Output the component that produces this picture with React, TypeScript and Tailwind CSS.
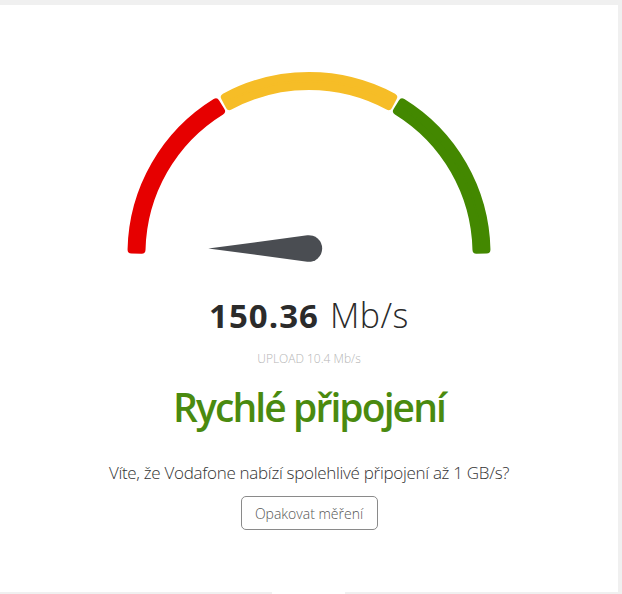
import React from 'react'

const CX = 200
const CY = 188.5

function sector(a1: number, a2: number, r1: number, r2: number) {
  const rad = (a: number) => (a * Math.PI) / 180
  const p = (r: number, a: number) => `${(CX + r * Math.cos(rad(a))).toFixed(2)} ${(CY - r * Math.sin(rad(a))).toFixed(2)}`
  return `M ${p(r2, a1)} A ${r2} ${r2} 0 0 1 ${p(r2, a2)} L ${p(r1, a2)} A ${r1} ${r1} 0 0 0 ${p(r1, a1)} Z`
}

const SEGMENTS = [
  { from: 178.7, to: 121.7, color: '#e60000' },
  { from: 118.3, to: 61.7, color: '#f6bd27' },
  { from: 58.3, to: 1.3, color: '#438800' },
]

function Gauge() {
  const nx = 200
  const ny = 183.5
  const r = 13.3
  return (
    <svg width="400" height="200" viewBox="0 0 400 200" className="block">
      {SEGMENTS.map(seg => (
        <path
          key={seg.color}
          d={sector(seg.from, seg.to, 167.5, 177.5)}
          fill={seg.color}
          stroke={seg.color}
          strokeWidth={8}
          strokeLinejoin="round"
        />
      ))}
      <path
        d={`M 99.3 ${ny} L ${nx - 1.76} ${ny - 13.2} A ${r} ${r} 0 1 1 ${nx - 1.76} ${ny + 13.2} Z`}
        fill="#4a4d52"
      />
    </svg>
  )
}

export default function App() {
  return (
    <div className="min-h-[594px] w-[622px] bg-[#f0f0f0] pt-[5px]" style={{ fontFamily: '"Open Sans", sans-serif' }}>
      <div className="flex h-[587px] w-[618px] flex-col items-center bg-white">
        <div className="mt-[60px]">
          <Gauge />
        </div>
        <div className="mt-[33px] flex items-baseline gap-[11px] leading-none text-[#2b2b2b]">
          <span className="text-[33px] font-bold tracking-[1px]">150.36</span>
          <span className="text-[34px] font-light tracking-[0.5px]">Mb/s</span>
        </div>
        <p className="mt-[21px] text-[12px] font-light leading-none text-[#b5b5b5]">UPLOAD 10.4 Mb/s</p>
        <h1 className="mt-[22px] text-[39px] font-semibold leading-none tracking-[-1.9px] text-[#4a8a0f]">
          Rychlé připojení
        </h1>
        <p className="mt-[38px] text-[17px] font-light leading-none tracking-[-0.3px] text-[#333]">
          Víte, že Vodafone nabízí spolehlivé připojení až 1 GB/s?
        </p>
        <button
          type="button"
          className="mt-[15px] h-[34px] w-[137px] rounded-[5px] border border-[#8a8a8a] text-[14px] font-light text-[#555]"
        >
          Opakovat měření
        </button>
      </div>
      <div className="ml-[272px] h-[2px] w-[73px] bg-white" />
    </div>
  )
}
